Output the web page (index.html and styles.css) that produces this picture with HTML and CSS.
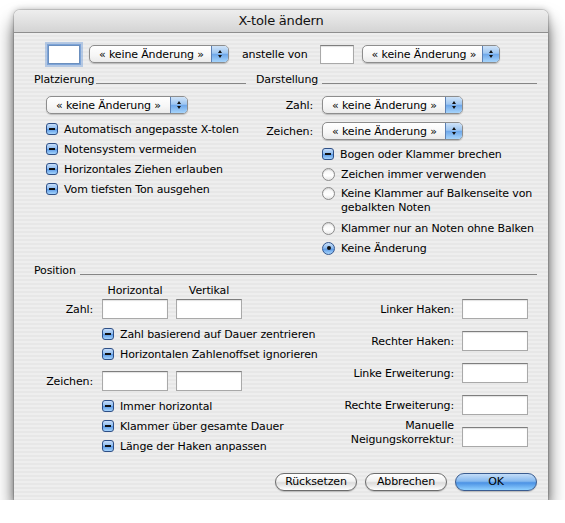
FILE: index.html
```html
<!DOCTYPE html>
<html lang="de">
<head>
<meta charset="utf-8">
<title>X-tole ändern</title>
<link rel="stylesheet" href="styles.css">
</head>
<body>
<div class="window">
  <div class="titlebar">X-tole ändern</div>
  <div class="content">
    <div class="toprow">
      <span class="field small focus"></span>
      <div class="popup p-top1"><span class="ptext">« keine Änderung »</span><span class="arrows"><i class="up"></i><i class="down"></i></span></div>
      <span class="toplabel">anstelle von</span>
      <span class="field small2"></span>
      <div class="popup p-top2"><span class="ptext">« keine Änderung »</span><span class="arrows"><i class="up"></i><i class="down"></i></span></div>
    </div>

    <div class="upper">
      <section class="place">
        <div class="sechead"><span>Platzierung</span><i class="rule"></i></div>
        <div class="popup p-place"><span class="ptext">« keine Änderung »</span><span class="arrows"><i class="up"></i><i class="down"></i></span></div>
        <ul class="opts place-opts">
          <li><i class="cb"></i>Automatisch angepasste X-tolen</li>
          <li><i class="cb"></i>Notensystem vermeiden</li>
          <li><i class="cb"></i>Horizontales Ziehen erlauben</li>
          <li><i class="cb"></i>Vom tiefsten Ton ausgehen</li>
        </ul>
      </section>

      <section class="look">
        <div class="sechead"><span>Darstellung</span><i class="rule"></i></div>
        <div class="formrow first">
          <label class="rlabel">Zahl:</label>
          <div class="popup p-look"><span class="ptext">« keine Änderung »</span><span class="arrows"><i class="up"></i><i class="down"></i></span></div>
        </div>
        <div class="formrow">
          <label class="rlabel">Zeichen:</label>
          <div class="popup p-look"><span class="ptext">« keine Änderung »</span><span class="arrows"><i class="up"></i><i class="down"></i></span></div>
        </div>
        <ul class="opts look-opts">
          <li><i class="cb"></i>Bogen oder Klammer brechen</li>
          <li><i class="rb"></i>Zeichen immer verwenden</li>
          <li class="two"><i class="rb"></i><span>Keine Klammer auf Balkenseite von<br>gebalkten Noten</span></li>
          <li><i class="rb"></i>Klammer nur an Noten ohne Balken</li>
          <li><i class="rb on"></i>Keine Änderung</li>
        </ul>
      </section>
    </div>

    <section class="position">
      <div class="sechead"><span>Position</span><i class="rule"></i></div>
      <div class="posgrid">
        <div class="posleft">
          <div class="colheads"><span>Horizontal</span><span>Vertikal</span></div>
          <div class="pairrow">
            <label class="plabel">Zahl:</label>
            <span class="field wide"></span><span class="field wide"></span>
          </div>
          <ul class="opts pos-opts">
            <li><i class="cb"></i>Zahl basierend auf Dauer zentrieren</li>
            <li><i class="cb"></i>Horizontalen Zahlenoffset ignorieren</li>
          </ul>
          <div class="pairrow second">
            <label class="plabel">Zeichen:</label>
            <span class="field wide"></span><span class="field wide"></span>
          </div>
          <ul class="opts pos-opts last">
            <li><i class="cb"></i>Immer horizontal</li>
            <li><i class="cb"></i>Klammer über gesamte Dauer</li>
            <li><i class="cb"></i>Länge der Haken anpassen</li>
          </ul>
        </div>
        <div class="posright">
          <div class="hrow"><label>Linker Haken:</label><span class="field wide"></span></div>
          <div class="hrow"><label>Rechter Haken:</label><span class="field wide"></span></div>
          <div class="hrow"><label>Linke Erweiterung:</label><span class="field wide"></span></div>
          <div class="hrow"><label>Rechte Erweiterung:</label><span class="field wide"></span></div>
          <div class="hrow twoline"><label>Manuelle<br>Neigungskorrektur:</label><span class="field wide"></span></div>
        </div>
      </div>
    </section>

    <div class="buttons">
      <button class="btn">Rücksetzen</button>
      <button class="btn">Abbrechen</button>
      <button class="btn default">OK</button>
    </div>
  </div>
</div>
</body>
</html>
```

FILE: styles.css
```css
* { box-sizing: border-box; }

html, body {
  margin: 0;
  padding: 0;
  background: #ffffff;
}

body {
  font-family: "DejaVu Sans", "Liberation Sans", sans-serif;
  font-size: 11px;
  letter-spacing: -0.13px;
  color: #000;
}

.window {
  margin: 10px 0 0 14px;
  width: 534px;
  height: 490px;
  border-radius: 6px 6px 0 0;
  overflow: hidden;
  box-shadow: 0 12px 18px rgba(0, 0, 0, 0.62), 0 0 7px rgba(0, 0, 0, 0.28), 0 0 0 1px rgba(0, 0, 0, 0.12);
  display: flex;
  flex-direction: column;
}

.titlebar {
  height: 23px;
  flex: none;
  background: linear-gradient(#eeeeee, #d4d4d4);
  border-bottom: 1px solid #8e8e8e;
  text-align: center;
  font-size: 13px;
  letter-spacing: -0.2px;
  line-height: 22px;
  color: #111;
}

.content {
  flex: 1;
  background: repeating-linear-gradient(to bottom, #eeeeee 0, #eeeeee 2px, #e7e7e7 2px, #e7e7e7 4px);
  padding: 10px 11px 0 20px;
}

/* top row */
.toprow {
  height: 22px;
  display: flex;
  align-items: center;
}

.field {
  display: block;
  height: 20px;
  background: #fff;
  border: 1px solid #a9a9a9;
  border-top-color: #7e7e7e;
  box-shadow: inset 0 1px 1px rgba(0, 0, 0, 0.12);
  flex: none;
}

.field.small { width: 32px; height: 19px; margin-left: 14px; }
.field.small2 { width: 34px; height: 19px; margin-left: 12px; }
.field.wide { width: 66px; }

.field.focus {
  border-color: #6b8fbe;
  box-shadow: 0 0 0 1px rgba(120, 160, 215, 0.9), 0 0 0 3px rgba(110, 155, 215, 0.45);
}

.toplabel { margin-left: 13px; }

.popup {
  flex: none;
  display: flex;
  align-items: center;
  height: 18px;
  border: 1px solid #8d8d8d;
  border-radius: 5px;
  background: linear-gradient(#ffffff, #f6f6f6 60%, #eaeaea);
  box-shadow: 0 1px 1px rgba(0, 0, 0, 0.2);
  overflow: hidden;
}

.popup .ptext {
  flex: 1;
  padding-left: 9px;
  white-space: nowrap;
}

.popup .arrows {
  width: 17px;
  height: 100%;
  border-left: 1px solid #5b80b4;
  background: linear-gradient(#cfe3f8 0%, #9ec6f1 45%, #6fa8ea 52%, #a6d4fb 100%);
  display: flex;
  flex-direction: column;
  align-items: center;
  justify-content: center;
  gap: 2px;
}

.arrows i {
  display: block;
  width: 0;
  height: 0;
  border-left: 2.5px solid transparent;
  border-right: 2.5px solid transparent;
}
.arrows .up { border-bottom: 3px solid #111; }
.arrows .down { border-top: 3px solid #111; }

.p-top1 { width: 140px; margin-left: 9px; }
.p-top2 { width: 138px; margin-left: 8px; }
.p-place { width: 142px; margin: 9px 0 0 12px; }
.p-look { width: 141px; }

/* sections */
.upper {
  display: grid;
  grid-template-columns: 212px 281px;
  column-gap: 10px;
  margin-top: 8px;
}

.sechead {
  display: flex;
  align-items: center;
  height: 14px;
  line-height: 14px;
}

.sechead .rule {
  flex: 1;
  height: 1px;
  background: #858585;
  margin: 6px 0 0 4px;
}

.place .sechead .rule { margin-left: 2px; }

.opts {
  list-style: none;
  margin: 0;
  padding: 0;
}

.opts li {
  height: 20px;
  display: flex;
  align-items: center;
  white-space: nowrap;
}

.opts li .cb,
.opts li .rb { margin-right: 6px; flex: none; }

.place-opts { margin: 5px 0 0 12px; }

.cb {
  display: block;
  width: 12px;
  height: 12px;
  border: 1px solid #2e4f86;
  border-radius: 3px;
  background: linear-gradient(#c7defa 0%, #8ebcef 45%, #5d9be6 55%, #a5d3fb 100%);
  position: relative;
}
.cb::after {
  content: "";
  position: absolute;
  left: 2px;
  right: 2px;
  top: 4px;
  height: 2px;
  background: #111;
}

.rb {
  display: block;
  width: 13px;
  height: 13px;
  border-radius: 50%;
  border: 1px solid #8a8a8a;
  background: linear-gradient(#f4f4f4, #ffffff 60%, #e6e6e6);
  box-shadow: inset 0 1px 1px rgba(0, 0, 0, 0.15);
  position: relative;
}
.rb.on {
  border-color: #34568d;
  background: linear-gradient(#c9e0fa 0%, #8fbcef 45%, #5e9be6 55%, #a8d5fb 100%);
  box-shadow: none;
}
.rb.on::after {
  content: "";
  position: absolute;
  left: 3.5px;
  top: 3.5px;
  width: 4px;
  height: 4px;
  border-radius: 50%;
  background: #111;
}

.formrow {
  display: flex;
  align-items: center;
  margin-top: 8px;
}
.formrow.first { margin-top: 9px; }

.rlabel {
  width: 57px;
  text-align: right;
  margin-right: 9px;
  flex: none;
  white-space: nowrap;
}

.look-opts { margin: 4px 0 0 66px; }
.look-opts li.two {
  height: auto;
  align-items: flex-start;
  padding: 3px 0;
  line-height: 14px;
}

/* position */
.position { margin-top: 6px; }

.posgrid {
  display: flex;
  justify-content: space-between;
}

.colheads {
  display: flex;
  height: 14px;
  line-height: 14px;
  margin: 6px 0 0 68px;
}
.colheads span { width: 66px; text-align: center; }
.colheads span + span { margin-left: 8px; }

.pairrow {
  display: flex;
  align-items: center;
  margin-top: 1px;
}
.pairrow .field + .field { margin-left: 8px; }
.pairrow.second { margin-top: 7px; }

.plabel {
  width: 59px;
  text-align: right;
  margin-right: 9px;
}

.pos-opts { margin: 5px 0 0 68px; }
.pos-opts.last { margin-top: 5px; }

.posright {
  padding: 21px 9px 0 0;
  display: flex;
  flex-direction: column;
  gap: 12px;
}

.hrow {
  display: flex;
  align-items: center;
  justify-content: flex-end;
}
.hrow label {
  text-align: right;
  margin-right: 8px;
  white-space: nowrap;
}
.hrow.twoline { align-items: flex-end; height: 20px; }
.hrow.twoline label { line-height: 14px; margin-bottom: 0; }

/* buttons */
.buttons {
  display: flex;
  justify-content: flex-end;
  gap: 8px;
  margin-top: 17px;
}

.btn {
  width: 82px;
  height: 18px;
  padding: 0;
  border: 1px solid #6c6c6c;
  border-radius: 9px;
  background: linear-gradient(#ffffff 0%, #f1f1f1 45%, #dcdcdc 55%, #ffffff 100%);
  box-shadow: 0 1px 1px rgba(0, 0, 0, 0.2);
  font-family: inherit;
  font-size: 11px;
  letter-spacing: -0.13px;
  color: #000;
  line-height: 16px;
}

.btn.default {
  border-color: #3a5c90;
  background: linear-gradient(#c4ddf8 0%, #86b9ef 45%, #4c92e4 55%, #8fd0ff 100%);
}
```
